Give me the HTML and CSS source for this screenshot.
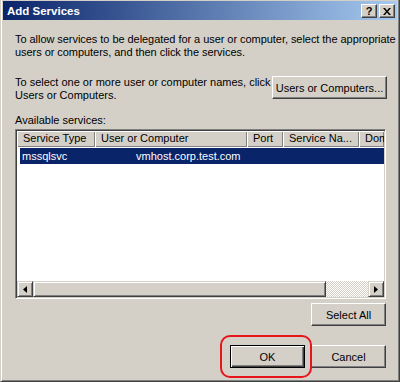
FILE: index.html
```html
<!DOCTYPE html>
<html lang="en">
<head>
    <meta charset="UTF-8">
    <title>Add Services</title>
    <link rel="stylesheet" href="styles.css">
</head>
<body>
    <div class="window">
        <div class="titlebar">
            <span class="title">Add Services</span>
            <div class="caption-buttons">
                <span class="cap-btn cap-help">?</span>
                <span class="cap-btn">
                    <svg width="8" height="7" viewBox="0 0 8 7"><path d="M0 0h2l2 2.5L6 0h2L5 3.5 8 7H6L4 4.5 2 7H0l3-3.5z" fill="#000"/></svg>
                </span>
            </div>
        </div>

        <div class="content">
            <p class="intro">To allow services to be delegated for a user or computer, select the appropriate<br>users or computers, and then click the services.</p>

            <div class="select-row">
                <p>To select one or more user or computer names, click<br>Users or Computers.</p>
                <button class="btn btn-users">Users or Computers...</button>
            </div>

            <div class="field-label">Available services:</div>
            <div class="listview">
                <div class="list-header">
                    <div class="col col-type">Service Type</div>
                    <div class="col col-user">User or Computer</div>
                    <div class="col col-port">Port</div>
                    <div class="col col-name">Service Na...</div>
                    <div class="col col-dom">Dom</div>
                </div>
                <div class="list-body">
                    <div class="row selected">
                        <span class="cell-type">mssqlsvc</span>
                        <span class="cell-user">vmhost.corp.test.com</span>
                    </div>
                </div>
                <div class="hscroll">
                    <span class="scroll-btn">
                        <svg width="4" height="7" viewBox="0 0 4 7"><path d="M4 0v7L0 3.5z" fill="#000"/></svg>
                    </span>
                    <span class="scroll-thumb"></span>
                    <span class="scroll-track"></span>
                    <span class="scroll-btn">
                        <svg width="4" height="7" viewBox="0 0 4 7"><path d="M0 0v7l4-3.5z" fill="#000"/></svg>
                    </span>
                </div>
            </div>

            <div class="select-all-row">
                <button class="btn">Select All</button>
            </div>

            <div class="footer">
                <button class="btn btn-default highlighted">OK</button>
                <button class="btn">Cancel</button>
            </div>
        </div>
    </div>
</body>
</html>
```

FILE: styles.css
```css
body {
    margin: 0;
    font-family: 'Liberation Sans', Arial, sans-serif;
    font-size: 11px;
    color: #000;
    background-color: #d4d0c8;
}

.window {
    width: 400px;
    height: 382px;
    box-sizing: border-box;
    background-color: #d4d0c8;
    border-left: 1px solid #d4d0c8;
    border-right: 1px solid #404040;
    border-bottom: 1px solid #404040;
    box-shadow: inset 1px 0 #fff, inset -1px -1px #808080;
    padding: 1px 2px 0 2px;
    position: relative;
}

.titlebar {
    height: 19px;
    display: flex;
    align-items: center;
    justify-content: space-between;
    background: linear-gradient(to right, #0a246a, #a6caf0);
    padding: 0 2px 0 4px;
}

.title {
    color: #fff;
    font-weight: bold;
    font-size: 11.5px;
}

.caption-buttons {
    display: flex;
    gap: 2px;
    margin-top: 1px;
}

.cap-btn {
    width: 16px;
    height: 14px;
    box-sizing: border-box;
    display: flex;
    align-items: center;
    justify-content: center;
    background-color: #d4d0c8;
    border: 1px solid;
    border-color: #fff #404040 #404040 #fff;
    box-shadow: inset -1px -1px #808080;
}

.cap-help {
    font-weight: bold;
    font-size: 11px;
    line-height: 1;
}

.content {
    padding: 0 11px 0 12px;
}

p {
    margin: 0;
    line-height: 13px;
}

.intro {
    margin-top: 13px;
    white-space: nowrap;
    letter-spacing: -0.05px;
}

.select-row {
    display: flex;
    justify-content: space-between;
    align-items: flex-start;
    margin-top: 17px;
}

.select-row p {
    white-space: nowrap;
}

.btn {
    font-family: 'Liberation Sans', Arial, sans-serif;
    font-size: 11px;
    color: #000;
    width: 75px;
    height: 23px;
    padding: 0;
    background-color: #d4d0c8;
    border: 1px solid;
    border-color: #fff #404040 #404040 #fff;
    box-shadow: inset -1px -1px #808080;
    border-radius: 0;
}

.btn-users {
    width: 115px;
    margin-right: -1px;
}

.btn-default {
    border: 1px solid #000;
    box-shadow: inset 1px 1px #fff, inset -1px -1px #404040, inset -2px -2px #808080;
}

.field-label {
    margin-top: 12px;
    line-height: 13px;
}

.listview {
    margin-top: 2px;
    height: 170px;
    box-sizing: border-box;
    border: 1px solid;
    border-color: #808080 #fff #fff #808080;
    box-shadow: inset 1px 1px #404040, inset -1px -1px #d4d0c8;
    padding: 1px;
    background-color: #fff;
    display: flex;
    flex-direction: column;
}

.list-header {
    display: flex;
    height: 16px;
    overflow: hidden;
    flex-shrink: 0;
}

.col {
    flex-shrink: 0;
    box-sizing: border-box;
    height: 16px;
    line-height: 15px;
    padding-left: 6px;
    background-color: #d4d0c8;
    box-shadow: inset 1px 1px #fff, inset -1px -1px #808080;
    white-space: nowrap;
    overflow: hidden;
}

.col-type { width: 78px; }
.col-user { width: 152px; }
.col-port { width: 36px; }
.col-name { width: 76px; }
.col-dom { flex: 1; flex-shrink: 1; }

.list-body {
    flex: 1;
    padding-top: 1px;
}

.row {
    height: 16px;
    line-height: 16px;
    margin-left: 3px;
    display: flex;
}

.row.selected {
    background-color: #0a246a;
    color: #fff;
}

.cell-type {
    width: 114px;
    padding-left: 2px;
}

.hscroll {
    height: 16px;
    display: flex;
    flex-shrink: 0;
}

.scroll-btn,
.scroll-thumb {
    box-sizing: border-box;
    background-color: #d4d0c8;
    border: 1px solid;
    border-color: #d4d0c8 #404040 #404040 #d4d0c8;
    box-shadow: inset 1px 1px #fff, inset -1px -1px #808080;
}

.scroll-btn {
    width: 16px;
    display: flex;
    align-items: center;
    justify-content: center;
}

.scroll-thumb {
    width: 293px;
}

.scroll-track {
    flex: 1;
    background: repeating-conic-gradient(#fff 0 25%, #d4d0c8 0 50%) 0 0 / 2px 2px;
}

.select-all-row {
    display: flex;
    justify-content: flex-end;
    margin-top: 4px;
}

.footer {
    display: flex;
    justify-content: flex-end;
    gap: 6px;
    margin-top: 19px;
}

.highlighted {
    position: relative;
}

.highlighted::after {
    content: "";
    position: absolute;
    left: -11px;
    top: -11px;
    right: -8px;
    bottom: -11px;
    border: 2px solid #e8141c;
    border-radius: 10px;
}
```
